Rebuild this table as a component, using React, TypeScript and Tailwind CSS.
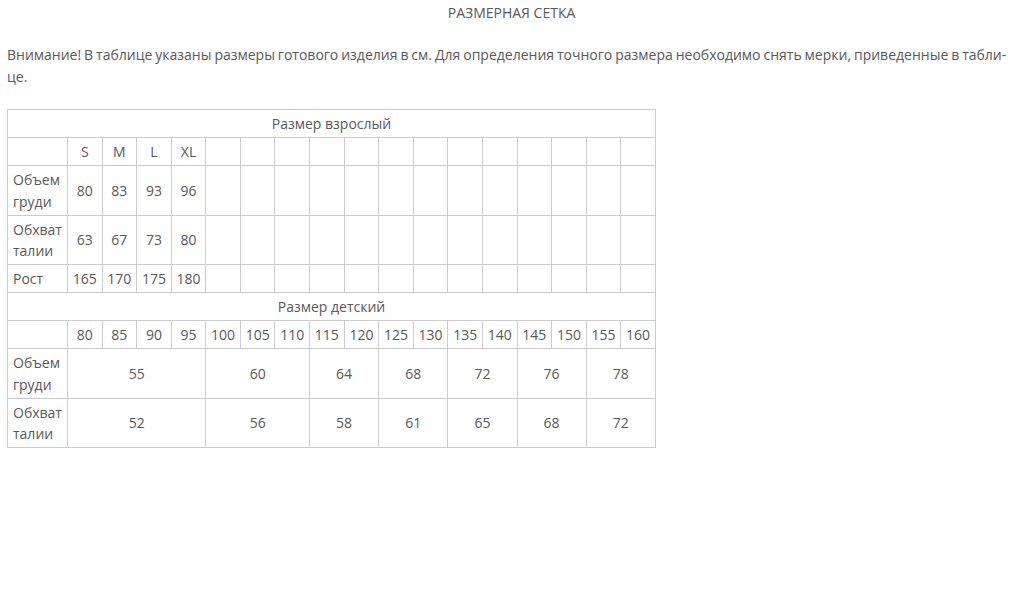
const adultSizes = ["S", "M", "L", "XL"];
const adultRows = [
  { label: ["Объем", "груди"], values: ["80", "83", "93", "96"] },
  { label: ["Обхват", "талии"], values: ["63", "67", "73", "80"] },
  { label: ["Рост"], values: ["165", "170", "175", "180"] },
];

const kidSizes = ["80", "85", "90", "95", "100", "105", "110", "115", "120", "125", "130", "135", "140", "145", "150", "155", "160"];
const kidRows = [
  { label: ["Объем", "груди"], cells: [["55", 4], ["60", 3], ["64", 2], ["68", 2], ["72", 2], ["76", 2], ["78", 2]] },
  { label: ["Обхват", "талии"], cells: [["52", 4], ["56", 3], ["58", 2], ["61", 2], ["65", 2], ["68", 2], ["72", 2]] },
] as const;

const td = "border border-[#cccccc] px-0 pt-[3px] pb-[2.4px] leading-[21.6px] text-center align-middle";
const tdLabel = "border border-[#cccccc] pl-[5px] pr-0 pt-[3px] pb-[2.4px] leading-[21.6px] text-left align-middle";

function Label({ lines }: { lines: readonly string[] }) {
  return (
    <>
      {lines.map((l, i) => (
        <span key={i} className="block">{l}</span>
      ))}
    </>
  );
}

export default function App() {
  const empty = Array.from({ length: 13 });
  return (
    <div className="min-h-screen bg-white px-[7px] pt-[2px] font-['Open_Sans',sans-serif] text-[14px] leading-[22px] text-[#595959]">
      <h1 className="text-center uppercase text-[14px] font-normal">Размерная сетка</h1>

      <p className="mt-[20px] whitespace-nowrap [word-spacing:-0.7px]">
        Внимание! В таблице указаны размеры готового изделия в см. Для определения точного размера необходимо снять мерки, приведенные в табли-
        <br />
        це.
      </p>

      <table className="mt-[21px] w-[649px] table-fixed border-collapse">
        <colgroup>
          <col className="w-[60px]" />
          {kidSizes.map((s) => (
            <col key={s} />
          ))}
        </colgroup>
        <tbody>
          <tr>
            <td colSpan={18} className={td}>Размер взрослый</td>
          </tr>
          <tr>
            <td className={tdLabel}></td>
            {adultSizes.map((s) => (
              <td key={s} className={td}>{s}</td>
            ))}
            {empty.map((_, i) => (
              <td key={i} className={td}></td>
            ))}
          </tr>
          {adultRows.map((r) => (
            <tr key={r.label.join()}>
              <td className={tdLabel}><Label lines={r.label} /></td>
              {r.values.map((v, i) => (
                <td key={i} className={td}>{v}</td>
              ))}
              {empty.map((_, i) => (
                <td key={i} className={td}></td>
              ))}
            </tr>
          ))}
          <tr>
            <td colSpan={18} className={td}>Размер детский</td>
          </tr>
          <tr>
            <td className={tdLabel}></td>
            {kidSizes.map((s) => (
              <td key={s} className={td}>{s}</td>
            ))}
          </tr>
          {kidRows.map((r) => (
            <tr key={r.label.join()}>
              <td className={tdLabel}><Label lines={r.label} /></td>
              {r.cells.map(([v, span], i) => (
                <td key={i} colSpan={span} className={td}>{v}</td>
              ))}
            </tr>
          ))}
        </tbody>
      </table>
    </div>
  );
}
